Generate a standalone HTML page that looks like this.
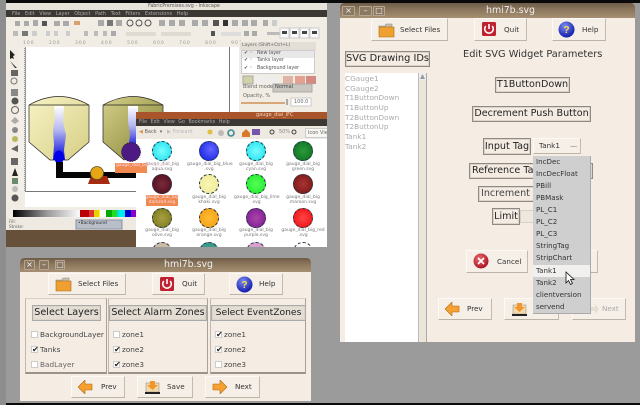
<!DOCTYPE html>
<html><head><meta charset="utf-8"><title>hmi7b.svg</title>
<style>
html,body{margin:0;padding:0}
html{background:#9b9b9b}
body{width:640px;height:405px;overflow:hidden;position:relative;background:#9b9b9b;font-family:"DejaVu Sans","Liberation Sans",sans-serif;color:#222;filter:blur(.3px)}
div,span,svg{position:absolute;box-sizing:border-box;white-space:nowrap}
.win{background:#f5ede4;border-radius:4px 4px 0 0}
.tb{left:0;top:0;right:0;background:linear-gradient(#6e5c48,#8a745a 40%,#a68f72);border-radius:4px 4px 0 0}
.tt{color:#eee;font-size:9.4px;text-align:center;left:0;right:0}
.wb{height:10px;border:1px solid #b5a690;background:#8a7862;color:#f2f2f2;font-size:8px;line-height:8px;text-align:center;border-radius:1px}
.btn{background:#f6efe7;border:1px solid;border-color:#fdf9f4 #c4bbae #bdb4a8 #fdf9f4;font-size:7.2px;line-height:20px;color:#333}
.btn span{white-space:nowrap}
.lb{border:1px solid #8f8a83;background:#f4ece3;font-size:9.6px;text-align:center;color:#222;box-shadow:inset 0 0 0 1px #dcd4ca}
.lg{background:#e4ddd3;border-color:#aaa}
.frame{border:1px solid transparent;border-right-color:#a8a298;border-bottom:2px solid #99938a;border-left-color:#c0b9ae;border-top-color:#d8d1c6}
.ck{width:7px;height:7px;background:#fff;border:1px solid #ccc;font-size:8px;line-height:5px;color:#222;text-align:center}
.ct{font-size:7.3px;color:#444}
.mi{left:3px;font-size:7.1px;color:#333;line-height:10px}
.id{left:0;font-size:7.3px;color:#aaa;line-height:10px}
.g{width:20px;height:20px;border-radius:50%;border:1px dashed #234}
.fl{font-size:4.5px;color:#777;text-align:center;width:44px;line-height:5px;white-space:normal}
.blur{filter:blur(.35px)}
</style></head><body>
<div style="left:0;top:0;width:640px;height:3px;background:#0a0a0a"></div>
<div style="left:0;top:403px;width:640px;height:2px;background:#0a0a0a"></div>
<div style="left:0;top:0;width:6px;height:405px;background:#8e8e8e"></div>

<!-- Inkscape -->
<div class="blur" style="left:6px;top:3px;width:321px;height:244px;background:#f1ece4;overflow:hidden">
 <div style="left:0;top:0;width:321px;height:7px;background:#e7e2da"></div>
 <div style="left:142px;top:1px;font-size:4.8px;color:#555">FabricPremises.svg - Inkscape</div>
 <div style="left:0;top:7px;width:321px;height:7px;background:#3c3834"></div>
 <div style="left:6px;top:8px;font-size:5px;color:#aaa;word-spacing:3px">File Edit View Layer Object Path Text Filters Extensions Help</div>
 <svg style="left:0;top:14px" width="321" height="34">
  <g fill="#aaa"><rect x="9" y="4" width="5" height="5"/><rect x="18" y="4" width="5" height="5"/><rect x="27" y="3" width="5" height="6"/><rect x="36" y="4" width="5" height="5" fill="#555"/><rect x="48" y="4" width="6" height="5"/><rect x="57" y="4" width="6" height="5"/><rect x="68" y="4" width="6" height="4" fill="#d8a070"/><rect x="92" y="3" width="6" height="6"/><rect x="101" y="3" width="6" height="6" fill="#777"/><rect x="110" y="3" width="6" height="6"/>
  <circle cx="124" cy="6" r="3" fill="none" stroke="#555"/><circle cx="133" cy="6" r="3" fill="none" stroke="#555"/><circle cx="142" cy="6" r="3" fill="none" stroke="#555"/><rect x="153" y="3" width="6" height="6"/><rect x="163" y="3" width="6" height="6"/><rect x="173" y="3" width="6" height="6"/><rect x="186" y="3" width="6" height="6"/><rect x="196" y="3" width="6" height="6"/><rect x="207" y="3" width="6" height="6" fill="#555"/><rect x="217" y="3" width="5" height="6" fill="#333"/><rect x="226" y="3" width="6" height="6"/><rect x="236" y="3" width="6" height="6"/><rect x="245" y="3" width="6" height="6"/><rect x="257" y="3" width="5" height="6"/><rect x="266" y="3" width="5" height="6" fill="#ccc"/>
  <rect x="7" y="14" width="5" height="5" fill="#bbb"/><rect x="16" y="14" width="6" height="5" fill="#777"/><rect x="26" y="14" width="5" height="5" fill="#ccc"/><rect x="40" y="14" width="4" height="5" fill="#ccc"/><rect x="48" y="14" width="4" height="5" fill="#ccc"/><rect x="60" y="14" width="4" height="5" fill="#ccc"/><rect x="78" y="14" width="4" height="5" fill="#bbb"/><rect x="88" y="14" width="4" height="5" fill="#bbb"/><rect x="97" y="14" width="4" height="5" fill="#bbb"/><rect x="105" y="14" width="5" height="5" fill="#aaa"/><rect x="120" y="15" width="30" height="4" fill="#e0dbd2"/><rect x="155" y="15" width="30" height="4" fill="#e0dbd2"/><rect x="205" y="14" width="4" height="5" fill="#555"/><rect x="215" y="15" width="20" height="4" fill="#ddd"/><rect x="238" y="14" width="5" height="5"/><rect x="246" y="14" width="5" height="5"/><rect x="261" y="15" width="13" height="3" fill="#bbb"/></g>
  <rect x="274" y="11" width="9" height="10" fill="#fafafa" stroke="#ccc"/><rect x="284" y="11" width="9" height="10" fill="#fafafa" stroke="#ccc"/><rect x="294" y="11" width="9" height="10" fill="#fafafa" stroke="#ccc"/><rect x="304" y="11" width="9" height="10" fill="#fafafa" stroke="#ccc"/>
  <g fill="#444"><rect x="276" y="14" width="5" height="3"/><rect x="286" y="14" width="5" height="3"/><rect x="296" y="14" width="5" height="3"/><rect x="306" y="14" width="5" height="3"/></g>
 </svg>
 <div style="left:17px;top:38px;width:210px;height:5px;font-size:4.5px;color:#999;letter-spacing:1px;word-spacing:12px">100 200 300 400 500 600 700 800 900</div>
 <!-- tool column -->
 <svg style="left:0;top:44px" width="20" height="160">
  <g fill="#666"><path d="M4 3l5 5-2 1 1 3-2-1-2 1z" fill="#222"/><path d="M4 14l7 7-2 0z" fill="#333"/><rect x="5" y="23" width="7" height="6"/><circle cx="8" cy="34" r="3" fill="none" stroke="#777"/><rect x="5" y="42" width="7" height="7" fill="#888"/><circle cx="9" cy="54" r="3.5" fill="#555"/><circle cx="9" cy="63" r="3.5" fill="none" stroke="#666"/><path d="M5 74l4-4 4 4-4 3z" fill="#aaa"/><circle cx="9" cy="83" r="3" fill="#888"/><circle cx="9" cy="92" r="3" fill="#b8b860"/><path d="M5 102l7-4v7z"/><rect x="5" y="111" width="7" height="7"/><path d="M6 129l3-8 3 8z" fill="#222"/><rect x="6" y="131" width="6" height="6" fill="#6a8a6a"/><circle cx="9" cy="142" r="3" fill="#bbb"/><circle cx="9" cy="151" r="3.5" fill="#555"/></g>
 </svg>
 <div style="left:13px;top:45px;width:6px;height:143px;background:#f4f0e9;border-right:1px dotted #999"></div>
 <!-- canvas -->
 <div style="left:19px;top:44px;width:214px;height:160px;background:#fff"></div>
 <div style="left:19px;top:44px;width:205px;height:145px;border-left:1px solid #999;border-bottom:1px solid #777;border-right:1px solid #777"></div>
 <svg style="left:0;top:-3px" width="321" height="247">
  <defs>
   <linearGradient id="t1" x1="0" y1="0" x2="1" y2="1"><stop offset="0" stop-color="#f7f3c4"/><stop offset="1" stop-color="#d6cf86"/></linearGradient>
   <linearGradient id="t2" x1="0" y1="0" x2="1" y2="1"><stop offset="0" stop-color="#d4d08a"/><stop offset="1" stop-color="#858033"/></linearGradient>
   <linearGradient id="w" x1="0" y1="0" x2="0" y2="1"><stop offset="0" stop-color="#fff"/><stop offset=".45" stop-color="#b4b6ee"/><stop offset="1" stop-color="#0000e0"/></linearGradient>
  </defs>
  <path d="M23 105Q53 88 83 105V142L62 160H44L23 142Z" fill="url(#t1)" stroke="#222" stroke-width=".7"/>
  <path d="M23 105H83" stroke="#222" stroke-width=".7"/>
  <path d="M97 105Q127 88 157 105V145H130L118 160 97 142Z" fill="url(#t2)" stroke="#222" stroke-width=".7"/>
  <path d="M97 105H157" stroke="#222" stroke-width=".7"/>
  <path d="M48 106H58L57 122 60 135 58 150 59 160H47L48 145 47 130 49 118Z" fill="url(#w)"/>
  <path d="M122 106H132V150H122L124 135 122 122Z" fill="url(#w)"/>
  <ellipse cx="53" cy="157" rx="5" ry="6.500" fill="#0000e6"/>
  <path d="M50 162H57V172H130V178H50Z" fill="#050505"/>
  <path d="M82 184L85 176H101L104 184Z" fill="#a62a10"/>
  <circle cx="91" cy="173" r="6.500" fill="#e6a512" stroke="#553" stroke-width=".8"/>
 </svg>
 <!-- layers panel -->
 <div style="left:233px;top:38px;width:88px;height:71px;background:#f1ece4"></div>
 <div style="left:234px;top:39px;width:76px;height:8px;background:#e3ded6;font-size:4.5px;line-height:8px;color:#666;padding-left:2px">Layers (Shift+Ctrl+L)</div>
 <div style="left:235px;top:47px;width:74px;height:24px;background:#fff;border:1px solid #ccc"></div>
 <div style="left:236px;top:48px;width:72px;height:7px;background:#e8e8e8"></div>
 <div style="left:238px;top:47px;font-size:4.8px;line-height:7px;color:#555">✔ ◦ &nbsp; New layer</div>
 <div style="left:238px;top:54px;font-size:4.8px;line-height:7px;color:#555">✔ ◦ &nbsp; Tanks layer</div>
 <div style="left:238px;top:62px;font-size:4.8px;line-height:7px;color:#555">✔ ◦ &nbsp; Background layer</div>
 <svg style="left:233px;top:70px" width="80" height="39">
  <rect x="4" y="3" width="10" height="8" fill="#cfd1a8" stroke="#aaa"/><rect x="17" y="3" width="8" height="8" fill="#eee"/><rect x="30" y="3" width="8" height="8" fill="#eee"/><rect x="44" y="3" width="10" height="8" fill="#e0b4a4"/><rect x="56" y="3" width="10" height="8" fill="#e4a090"/><rect x="67" y="3" width="10" height="8" fill="#d48a80"/>
  <rect x="34" y="11" width="39" height="8" fill="#c9c6bf" stroke="#aaa"/>
  <rect x="2" y="29" width="44" height="2" fill="#d9a878"/><rect x="47" y="26" width="2" height="6" fill="#aaa"/><rect x="52" y="25" width="20" height="8" fill="#fff" stroke="#ccc"/>
 </svg>
 <div style="left:237px;top:81px;font-size:5px;color:#666">Blend mode</div>
 <div style="left:269px;top:81px;font-size:5px;color:#444">Normal</div>
 <div style="left:237px;top:90px;font-size:5px;color:#666">Opacity, %</div>
 <div style="left:288px;top:96px;font-size:5px;color:#666">100.0</div>
 <!-- palette -->
 <svg style="left:0;top:205px" width="130" height="25">
  <defs><linearGradient id="gs"><stop offset="0" stop-color="#000"/><stop offset=".5" stop-color="#999"/><stop offset="1" stop-color="#fff"/></linearGradient></defs>
  <rect x="7" y="2" width="68" height="7" fill="url(#gs)"/>
  <rect x="75" y="2" width="55" height="7" fill="#fff"/>
  <rect x="74" y="2" width="9" height="7" fill="#b00"/><rect x="83" y="2" width="5" height="7" fill="#d33"/><rect x="88" y="2" width="5" height="7" fill="#e8d000"/><rect x="93" y="2" width="3" height="7" fill="#ff0"/><rect x="94" y="2" width="6" height="7" fill="#fff"/><rect x="100" y="2" width="6" height="7" fill="#0a0"/><rect x="106" y="2" width="5" height="7" fill="#2d2"/><rect x="111" y="2" width="5" height="7" fill="#0dd"/><rect x="113" y="2" width="6" height="7" fill="#0ee"/><rect x="119" y="2" width="10" height="7" fill="#00c"/><rect x="125" y="2" width="5" height="7" fill="#80c"/>
  <rect x="0" y="10" width="130" height="15" fill="#eee9e1"/>
  <rect x="70" y="12" width="46" height="9" fill="#b9bfc9" stroke="#8a93a2"/>
 </svg>
 <div style="left:3px;top:216px;font-size:4.2px;color:#666;line-height:5px">Fill:<br>Stroke:</div>
 <div style="left:72px;top:218px;font-size:4.4px;color:#333">•Background</div>
 <div style="left:0;top:227px;width:130px;height:17px;background:#66503a"></div>
 <!-- file manager -->
 <div style="left:130px;top:109px;width:191px;height:135px;background:#fff;overflow:hidden">
  <div style="left:0;top:0;width:191px;height:7px;background:#a8552c"></div>
  <div style="left:120px;top:0;font-size:5px;line-height:7px;color:#f3d3b8">gauge_dial_IFC</div>
  <div style="left:0;top:7px;width:191px;height:7px;background:#3c3834"></div>
  <div style="left:3px;top:7px;font-size:4.8px;line-height:7px;color:#aaa;word-spacing:2px">File Edit View Go Bookmarks Help</div>
  <div style="left:0;top:14px;width:191px;height:13px;background:#eee9e1"></div>
  <div style="left:3px;top:17px;font-size:5px;color:#666"><span style="position:static;color:#d9934a">◀</span> Back &nbsp;▾ &nbsp; <span style="position:static;color:#bbb">▶ Forward</span></div>
  <svg style="left:70px;top:15px" width="120" height="12"><circle cx="4" cy="5" r="2.500" fill="#e0c040"/><circle cx="15" cy="6" r="3" fill="#bbb"/><circle cx="25" cy="6" r="3" fill="none" stroke="#3a8a9a" stroke-width="1.600"/><path d="M36 6l4-4 4 4v4h-8z" fill="#d97a2a"/><rect x="46" y="2" width="8" height="6" fill="#75a"/><circle cx="66" cy="5" r="2" fill="none" stroke="#444"/><circle cx="88" cy="5" r="2" fill="none" stroke="#444"/></svg>
  <div style="left:143px;top:17px;font-size:5px;color:#888">50%</div>
  <div style="left:169px;top:16px;width:30px;height:10px;border:1px solid #ccc;background:#f8f6f2;font-size:5px;line-height:8px;color:#666;padding-left:2px">Icon View</div>
 </div>
 <div class="g" style="left:146px;top:138px;background:radial-gradient(circle,#7ff,#1cdcec)"></div>
 <div class="g" style="left:193px;top:138px;background:radial-gradient(circle at 60% 40%,#66f,#0a1ce0)"></div>
 <div class="g" style="left:240px;top:138px;background:radial-gradient(circle,#7ff,#1cdcec)"></div>
 <div class="g" style="left:287px;top:138px;background:radial-gradient(circle,#2a9a3a,#0d6e20)"></div>
 <div class="g" style="left:146px;top:171px;background:radial-gradient(circle,#7a2a3a,#4d0c1c)"></div>
 <div class="g" style="left:193px;top:171px;background:radial-gradient(circle,#f8f6b0,#eee79a)"></div>
 <div class="g" style="left:240px;top:171px;background:radial-gradient(circle,#5f5,#1ce82c)"></div>
 <div class="g" style="left:287px;top:171px;background:radial-gradient(circle,#a33,#741414)"></div>
 <div class="g" style="left:146px;top:205px;background:radial-gradient(circle,#a8a040,#77771c)"></div>
 <div class="g" style="left:193px;top:205px;background:radial-gradient(circle,#fb3,#f29c10)"></div>
 <div class="g" style="left:240px;top:205px;background:radial-gradient(circle,#a4a,#7a1a90)"></div>
 <div class="g" style="left:287px;top:205px;background:radial-gradient(circle,#f44,#ee0c10)"></div>
 <div class="g" style="left:146px;top:239px;background:#c9bba4"></div>
 <div class="g" style="left:193px;top:239px;background:#3a9a8a"></div>
 <div class="g" style="left:240px;top:239px;background:#d8a0d0"></div>
 <div class="g" style="left:287px;top:239px;background:#fff"></div>
 <div class="fl" style="left:134px;top:159px">gauge_dial_big<br>aqua.svg</div>
 <div class="fl" style="left:181px;top:159px">gauge_dial_big_blue<br>.svg</div>
 <div class="fl" style="left:228px;top:159px">gauge_dial_big<br>cyan.svg</div>
 <div class="fl" style="left:275px;top:159px">gauge_dial_big<br>green.svg</div>
 <div style="left:140px;top:192px;width:32px;height:11px;background:#f08a50"></div>
 <div class="fl" style="left:134px;top:192px;color:#fde">gauge_dial_big<br>darkred.svg</div>
 <div class="fl" style="left:181px;top:192px">gauge_dial_big<br>khaki.svg</div>
 <div class="fl" style="left:228px;top:192px">gauge_dial_big_lime<br>.svg</div>
 <div class="fl" style="left:275px;top:192px">gauge_dial_big<br>maroon.svg</div>
 <div class="fl" style="left:134px;top:225px">gauge_dial_big<br>olive.svg</div>
 <div class="fl" style="left:181px;top:225px">gauge_dial_big<br>orange.svg</div>
 <div class="fl" style="left:228px;top:225px">gauge_dial_big<br>purple.svg</div>
 <div class="fl" style="left:275px;top:225px">gauge_dial_big_red<br>.svg</div>
 <!-- selected purple gauge on top -->
 <svg style="left:0;top:0" width="160" height="180"><circle cx="125" cy="149" r="9.500" fill="#4c1a82" stroke="#222" stroke-width=".7" stroke-dasharray="1.500 1"/><rect x="109" y="160" width="32" height="10" fill="#f08a50"/></svg>
 <div style="left:110px;top:160px;width:30px;font-size:4.400px;line-height:5px;color:#fde;text-align:center;white-space:normal">gauge_dial_big_purple.svg</div>
</div>
<div style="left:327px;top:3px;width:13px;height:340px;background:#9b9b9b"></div>

<!-- Right window -->
<div class="win" style="left:340px;top:3px;width:295px;height:339px">
 <div class="tb" style="height:15px"></div>
 <div class="tt" style="top:2px;left:46px">hmi7b.svg</div>
 <div class="wb" style="left:2px;top:3px;width:13px">×</div><div class="wb" style="left:19px;top:3px;width:13px">–</div><div class="wb" style="left:33px;top:3px;width:12px">□</div>
</div>
<div class="btn" style="left:371px;top:18px;width:77px;height:23px"><span style="left:28px;top:1px">Select Files</span></div>
<div class="btn" style="left:474px;top:18px;width:53px;height:23px"><span style="left:29px;top:1px">Quit</span></div>
<div class="btn" style="left:552px;top:18px;width:54px;height:23px"><span style="left:29px;top:1px">Help</span></div>
<svg style="left:378px;top:21px" width="18" height="18"><path d="M1 5h6l1-2h6v3H1z" fill="#c8c0a8" stroke="#888" stroke-width=".6"/><path d="M1 6h15v10H1z" fill="#f0a030" stroke="#a86a18" stroke-width=".6"/></svg>
<svg style="left:481px;top:21px" width="16" height="16"><rect x="1" y="1" width="14" height="14" rx="1.500" fill="#c02030"/><path d="M4.800 5a4.300 4.300 0 1 0 6.400 0" fill="none" stroke="#fff" stroke-width="1.600"/><path d="M8 3v5" stroke="#fff" stroke-width="1.600"/></svg>
<svg style="left:558px;top:21px" width="17" height="17"><defs><radialGradient id="b" cx=".4" cy=".3" r=".75"><stop offset="0" stop-color="#7a8cf0"/><stop offset="1" stop-color="#0a14a8"/></radialGradient></defs><circle cx="8.500" cy="8.500" r="8" fill="url(#b)"/><text x="8.500" y="12" font-size="10" font-family="Liberation Sans" font-weight="bold" fill="#ffe04a" text-anchor="middle">?</text></svg>

<div class="lb" style="left:345px;top:51px;width:85px;height:16px;line-height:14px;font-size:9.800px">SVG Drawing IDs</div>
<div style="left:345px;top:73px;width:73px;height:269px;background:#fff">
 <div class="id" style="top:1px">CGauge1</div><div class="id" style="top:11px">CGauge2</div><div class="id" style="top:20px">T1ButtonDown</div><div class="id" style="top:30px">T1ButtonUp</div><div class="id" style="top:40px">T2ButtonDown</div><div class="id" style="top:49px">T2ButtonUp</div><div class="id" style="top:59px">Tank1</div><div class="id" style="top:69px">Tank2</div></div>
<div style="left:418px;top:73px;width:9px;height:269px;background:#ece5da;border-left:1px solid #bbb;border-right:1px solid #aaa"></div>
<svg style="left:419px;top:73px" width="7" height="8"><rect width="7" height="7" fill="#eee"/><path d="M3.500 1L6 6H1z" fill="#999"/></svg>
<div style="left:463px;top:48px;font-size:9.800px;line-height:14px;color:#333">Edit SVG Widget Parameters</div>
<div class="lb" style="left:495px;top:77px;width:75px;height:16px;line-height:14px">T1ButtonDown</div>
<div class="lb" style="left:472px;top:106px;width:119px;height:16px;line-height:14px">Decrement Push Button</div>
<div class="lb" style="left:483px;top:138px;width:48px;height:17px;line-height:15px">Input Tag</div>
<div class="btn" style="left:533px;top:138px;width:48px;height:16px;line-height:14px;padding-left:5px">Tank1<span style="left:36px;top:0;color:#777">—</span></div>
<div class="lb" style="left:469px;top:163px;width:124px;height:16px;line-height:14px;text-align:left;padding-left:2px;overflow:hidden">Reference Tag</div>
<div class="lb" style="left:478px;top:186px;width:110px;height:16px;line-height:14px;text-align:left;padding-left:2px;color:#444">Increment</div>
<div class="lb" style="left:492px;top:208px;width:28px;height:17px;line-height:15px">Limit</div>
<div style="left:520px;top:210px;width:20px;height:13px;background:#efe8de;border:1px solid #d8d0c6"></div>
<div class="btn" style="left:466px;top:250px;width:62px;height:23px"><span style="left:30px;top:1px">Cancel</span></div>
<div class="btn" style="left:560px;top:250px;width:38px;height:23px"></div>
<svg style="left:473px;top:253px" width="17" height="17"><defs><radialGradient id="r" cx=".4" cy=".35" r=".7"><stop offset="0" stop-color="#e87070"/><stop offset="1" stop-color="#a80c20"/></radialGradient></defs><circle cx="8" cy="8" r="7.500" fill="url(#r)"/><path d="M5 5l6 6M11 5l-6 6" stroke="#fff" stroke-width="1.600"/></svg>
<div class="btn" style="left:438px;top:298px;width:54px;height:22px"><span style="left:28px;top:0">Prev</span></div>
<div class="btn" style="left:504px;top:298px;width:55px;height:22px"></div>
<div class="btn" style="left:572px;top:298px;width:54px;height:22px;color:#aaa"><span style="left:29px;top:0">Next</span><svg style="left:17px;top:5px" width="10" height="10"><path d="M0 3h5V0l4 5-4 5V7H0z" fill="#e5ded4"/></svg></div>
<svg style="left:445px;top:302px" width="15" height="14"><path d="M0 7L7 0v4h7v6H7v4z" fill="#f5a030" stroke="#b06a10" stroke-width=".6"/></svg>
<svg style="left:512px;top:302px" width="16" height="15"><rect x="1" y="3" width="13" height="9" fill="#f3d8a8" stroke="#888" stroke-width=".5"/><path d="M5 1h5v4h3L7.500 10 2 5h3z" fill="#f0962c"/><rect x="0" y="12" width="15" height="2" fill="#222"/></svg>

<!-- Dropdown -->
<div style="left:533px;top:156px;width:58px;height:158px;background:#cfcfcf;border-right:1px solid #aaa;border-bottom:1px solid #aaa">
 <div style="left:0;top:109px;width:57px;height:12px;background:#f1f0ee"></div>
 <div class="mi" style="top:1px">IncDec</div><div class="mi" style="top:13px">IncDecFloat</div><div class="mi" style="top:25px">PBill</div><div class="mi" style="top:37px">PBMask</div><div class="mi" style="top:49px">PL_C1</div><div class="mi" style="top:61px">PL_C2</div><div class="mi" style="top:73px">PL_C3</div><div class="mi" style="top:85px">StringTag</div><div class="mi" style="top:97px">StripChart</div><div class="mi" style="top:110px">Tank1</div><div class="mi" style="top:122px">Tank2</div><div class="mi" style="top:134px">clientversion</div><div class="mi" style="top:146px">servend</div>
</div>
<svg style="left:565px;top:271px" width="11" height="15"><path d="M1 1V12L3.500 9.500 5.500 13.500 7.500 12.500 5.500 8.500H9Z" fill="#fff" stroke="#111" stroke-width=".8"/></svg>

<!-- Bottom-left window -->
<div class="win" style="left:20px;top:258px;width:291px;height:143px">
 <div class="tb" style="height:14px"></div>
 <div class="tt" style="top:1px;left:46px">hmi7b.svg</div>
 <div class="wb" style="left:4px;top:2px;width:11px">×</div><div class="wb" style="left:19px;top:2px;width:10px">–</div><div class="wb" style="left:35px;top:2px;width:10px">□</div>
</div>
<div class="btn" style="left:48px;top:273px;width:78px;height:22px"><span style="left:29px;top:0">Select Files</span></div>
<div class="btn" style="left:152px;top:273px;width:53px;height:22px"><span style="left:29px;top:0">Quit</span></div>
<div class="btn" style="left:229px;top:273px;width:54px;height:22px"><span style="left:29px;top:0">Help</span></div>
<svg style="left:55px;top:275px" width="18" height="18"><path d="M1 5h6l1-2h6v3H1z" fill="#c8c0a8" stroke="#888" stroke-width=".6"/><path d="M1 6h15v10H1z" fill="#f0a030" stroke="#a86a18" stroke-width=".6"/></svg>
<svg style="left:159px;top:276px" width="16" height="16"><rect x="1" y="1" width="14" height="14" rx="1.500" fill="#c02030"/><path d="M4.800 5a4.300 4.300 0 1 0 6.400 0" fill="none" stroke="#fff" stroke-width="1.600"/><path d="M8 3v5" stroke="#fff" stroke-width="1.600"/></svg>
<svg style="left:236px;top:276px" width="17" height="17"><circle cx="8.500" cy="8.500" r="8" fill="url(#b)"/><text x="8.500" y="12" font-size="10" font-family="Liberation Sans" font-weight="bold" fill="#ffe04a" text-anchor="middle">?</text></svg>

<div class="frame" style="left:25px;top:298px;width:82px;height:76px"></div>
<div class="frame" style="left:108px;top:298px;width:100px;height:76px"></div>
<div class="frame" style="left:210px;top:298px;width:96px;height:76px"></div>
<div class="lb lg" style="left:32px;top:305px;width:69px;height:16px;line-height:14px">Select Layers</div>
<div class="lb lg" style="left:109px;top:305px;width:98px;height:16px;line-height:14px">Select Alarm Zones</div>
<div class="lb lg" style="left:211px;top:305px;width:95px;height:16px;line-height:14px;font-size:9.200px">Select EventZones</div>

<div class="ck" style="left:31px;top:331px"></div><div class="ct" style="left:40px;top:330px">BackgroundLayer</div>
<div class="ck" style="left:31px;top:346px">✔</div><div class="ct" style="left:40px;top:345px">Tanks</div>
<div class="ck" style="left:31px;top:361px"></div><div class="ct" style="left:40px;top:360px;color:#666">BadLayer</div>
<div class="ck" style="left:113px;top:331px"></div><div class="ct" style="left:122px;top:330px">zone1</div>
<div class="ck" style="left:113px;top:346px">✔</div><div class="ct" style="left:122px;top:345px">zone2</div>
<div class="ck" style="left:113px;top:361px">✔</div><div class="ct" style="left:122px;top:360px">zone3</div>
<div class="ck" style="left:215px;top:331px">✔</div><div class="ct" style="left:224px;top:330px">zone1</div>
<div class="ck" style="left:215px;top:346px">✔</div><div class="ct" style="left:224px;top:345px">zone2</div>
<div class="ck" style="left:215px;top:361px"></div><div class="ct" style="left:224px;top:360px">zone3</div>

<div class="btn" style="left:71px;top:376px;width:54px;height:22px"><span style="left:29px;top:0">Prev</span></div>
<div class="btn" style="left:137px;top:376px;width:56px;height:22px"><span style="left:29px;top:0">Save</span></div>
<div class="btn" style="left:205px;top:376px;width:55px;height:22px"><span style="left:29px;top:0">Next</span></div>
<svg style="left:78px;top:380px" width="15" height="14"><path d="M0 7L7 0v4h7v6H7v4z" fill="#f5a030" stroke="#b06a10" stroke-width=".6"/></svg>
<svg style="left:145px;top:380px" width="16" height="15"><rect x="1" y="3" width="13" height="9" fill="#f3d8a8" stroke="#888" stroke-width=".5"/><path d="M5 1h5v4h3L7.500 10 2 5h3z" fill="#f0962c"/><rect x="0" y="12" width="15" height="2" fill="#222"/></svg>
<svg style="left:212px;top:380px" width="15" height="14"><path d="M15 7L8 0v4H1v6h7v4z" fill="#f5a030" stroke="#b06a10" stroke-width=".6"/></svg>
</body></html>
